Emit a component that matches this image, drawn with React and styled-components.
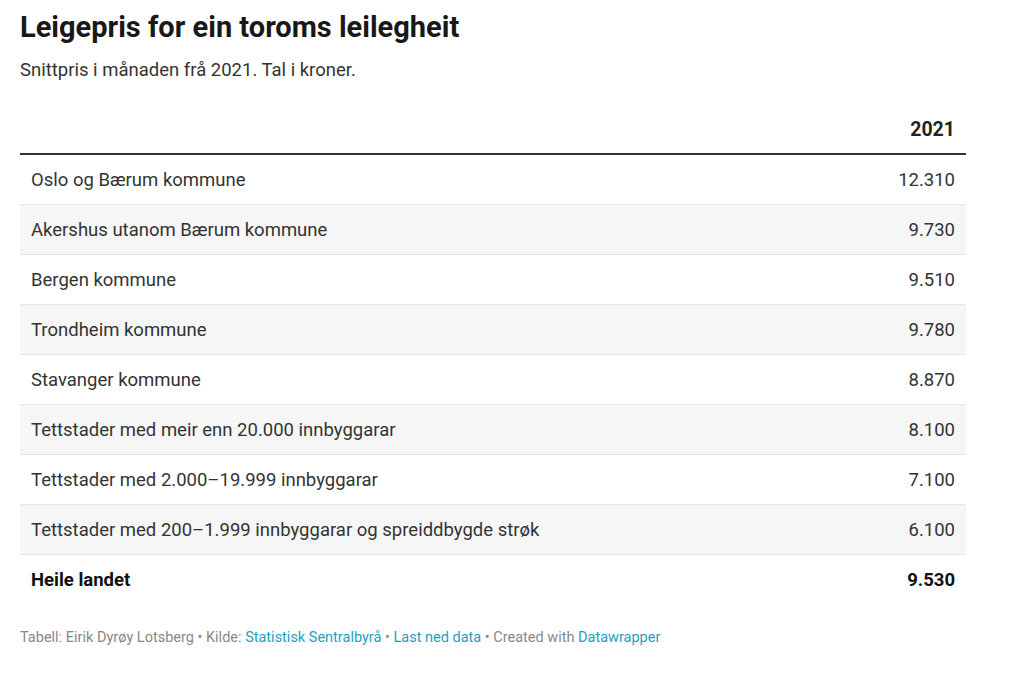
import React from "react"
import styled, { createGlobalStyle } from "styled-components"

const GlobalStyle = createGlobalStyle`
  body {
    margin: 0;
    background: #fff;
    font-family: Roboto, "Liberation Sans", sans-serif;
    color: #333;
  }
`

const Wrapper = styled.div`
  padding: 8px 58px 0 20px;
`

const Title = styled.h1`
  margin: 0;
  font-size: 29px;
  line-height: 38px;
  font-weight: 700;
  color: #181818;
`

const Subtitle = styled.p`
  margin: 13px 0 0;
  font-size: 18.5px;
  line-height: 22px;
  color: #333;
`

const Table = styled.table`
  width: 100%;
  margin-top: 32px;
  border-collapse: collapse;
  font-size: 18.5px;
`

const HeadCell = styled.th`
  padding: 0 11px 8px;
  height: 32px;
  text-align: ${(p) => (p.$num ? "right" : "left")};
  font-weight: 700;
  font-size: 19.5px;
  color: #222;
  border-bottom: 2px solid #333;
`

const Row = styled.tr`
  background: ${(p) => (p.$alt ? "#f6f6f6" : "#fff")};
  border-bottom: ${(p) => (p.$last ? "none" : "1px solid #e6e6e6")};
`

const Cell = styled.td`
  height: 49px;
  padding: 0 11px;
  text-align: ${(p) => (p.$num ? "right" : "left")};
  font-weight: ${(p) => (p.$bold ? 700 : 400)};
  color: ${(p) => (p.$bold ? "#111" : "#333")};
  font-variant-numeric: tabular-nums;
`

const Footer = styled.p`
  margin: 25px 0 0;
  font-size: 14.5px;
  color: #888;
`

const Link = styled.a`
  color: #1d9fc2;
  text-decoration: none;
`

const rows = [
  ["Oslo og Bærum kommune", "12.310"],
  ["Akershus utanom Bærum kommune", "9.730"],
  ["Bergen kommune", "9.510"],
  ["Trondheim kommune", "9.780"],
  ["Stavanger kommune", "8.870"],
  ["Tettstader med meir enn 20.000 innbyggarar", "8.100"],
  ["Tettstader med 2.000–19.999 innbyggarar", "7.100"],
  ["Tettstader med 200–1.999 innbyggarar og spreiddbygde strøk", "6.100"],
]

export default function App() {
  return (
    <Wrapper>
      <GlobalStyle />
      <Title>Leigepris for ein toroms leilegheit</Title>
      <Subtitle>Snittpris i månaden frå 2021. Tal i kroner.</Subtitle>
      <Table>
        <thead>
          <tr>
            <HeadCell></HeadCell>
            <HeadCell $num>2021</HeadCell>
          </tr>
        </thead>
        <tbody>
          {rows.map(([name, value], i) => (
            <Row key={name} $alt={i % 2 === 1}>
              <Cell>{name}</Cell>
              <Cell $num>{value}</Cell>
            </Row>
          ))}
          <Row $last>
            <Cell $bold>Heile landet</Cell>
            <Cell $num $bold>9.530</Cell>
          </Row>
        </tbody>
      </Table>
      <Footer>
        Tabell: Eirik Dyrøy Lotsberg • Kilde: <Link>Statistisk Sentralbyrå</Link> •{" "}
        <Link>Last ned data</Link> • Created with <Link>Datawrapper</Link>
      </Footer>
    </Wrapper>
  )
}
